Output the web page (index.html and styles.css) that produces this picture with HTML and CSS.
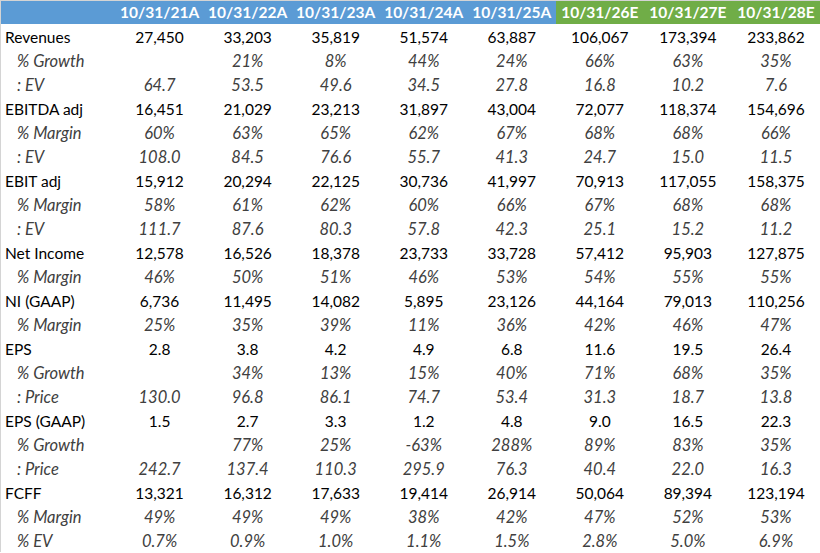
FILE: index.html
```html
<!DOCTYPE html>
<html>
<head>
<meta charset="utf-8">
<link rel="stylesheet" href="styles.css">
</head>
<body>
<table class="fin">
  <colgroup>
    <col class="c-label">
    <col class="c-num"><col class="c-num"><col class="c-num"><col class="c-num">
    <col class="c-num"><col class="c-num"><col class="c-num"><col class="c-num">
  </colgroup>
  <thead>
    <tr>
      <th class="hd-a"></th>
      <th class="hd-a">10/31/21A</th>
      <th class="hd-a">10/31/22A</th>
      <th class="hd-a">10/31/23A</th>
      <th class="hd-a">10/31/24A</th>
      <th class="hd-a">10/31/25A</th>
      <th class="hd-e">10/31/26E</th>
      <th class="hd-e">10/31/27E</th>
      <th class="hd-e">10/31/28E</th>
    </tr>
  </thead>
  <tbody>
    <tr class="main"><td>Revenues</td><td>27,450</td><td>33,203</td><td>35,819</td><td>51,574</td><td>63,887</td><td>106,067</td><td>173,394</td><td>233,862</td></tr>
    <tr class="sub"><td>% Growth</td><td></td><td>21%</td><td>8%</td><td>44%</td><td>24%</td><td>66%</td><td>63%</td><td>35%</td></tr>
    <tr class="sub"><td>: EV</td><td>64.7</td><td>53.5</td><td>49.6</td><td>34.5</td><td>27.8</td><td>16.8</td><td>10.2</td><td>7.6</td></tr>
    <tr class="main"><td>EBITDA adj</td><td>16,451</td><td>21,029</td><td>23,213</td><td>31,897</td><td>43,004</td><td>72,077</td><td>118,374</td><td>154,696</td></tr>
    <tr class="sub"><td>% Margin</td><td>60%</td><td>63%</td><td>65%</td><td>62%</td><td>67%</td><td>68%</td><td>68%</td><td>66%</td></tr>
    <tr class="sub"><td>: EV</td><td>108.0</td><td>84.5</td><td>76.6</td><td>55.7</td><td>41.3</td><td>24.7</td><td>15.0</td><td>11.5</td></tr>
    <tr class="main"><td>EBIT adj</td><td>15,912</td><td>20,294</td><td>22,125</td><td>30,736</td><td>41,997</td><td>70,913</td><td>117,055</td><td>158,375</td></tr>
    <tr class="sub"><td>% Margin</td><td>58%</td><td>61%</td><td>62%</td><td>60%</td><td>66%</td><td>67%</td><td>68%</td><td>68%</td></tr>
    <tr class="sub"><td>: EV</td><td>111.7</td><td>87.6</td><td>80.3</td><td>57.8</td><td>42.3</td><td>25.1</td><td>15.2</td><td>11.2</td></tr>
    <tr class="main"><td>Net Income</td><td>12,578</td><td>16,526</td><td>18,378</td><td>23,733</td><td>33,728</td><td>57,412</td><td>95,903</td><td>127,875</td></tr>
    <tr class="sub"><td>% Margin</td><td>46%</td><td>50%</td><td>51%</td><td>46%</td><td>53%</td><td>54%</td><td>55%</td><td>55%</td></tr>
    <tr class="main"><td>NI (GAAP)</td><td>6,736</td><td>11,495</td><td>14,082</td><td>5,895</td><td>23,126</td><td>44,164</td><td>79,013</td><td>110,256</td></tr>
    <tr class="sub"><td>% Margin</td><td>25%</td><td>35%</td><td>39%</td><td>11%</td><td>36%</td><td>42%</td><td>46%</td><td>47%</td></tr>
    <tr class="main"><td>EPS</td><td>2.8</td><td>3.8</td><td>4.2</td><td>4.9</td><td>6.8</td><td>11.6</td><td>19.5</td><td>26.4</td></tr>
    <tr class="sub"><td>% Growth</td><td></td><td>34%</td><td>13%</td><td>15%</td><td>40%</td><td>71%</td><td>68%</td><td>35%</td></tr>
    <tr class="sub"><td>: Price</td><td>130.0</td><td>96.8</td><td>86.1</td><td>74.7</td><td>53.4</td><td>31.3</td><td>18.7</td><td>13.8</td></tr>
    <tr class="main"><td>EPS (GAAP)</td><td>1.5</td><td>2.7</td><td>3.3</td><td>1.2</td><td>4.8</td><td>9.0</td><td>16.5</td><td>22.3</td></tr>
    <tr class="sub"><td>% Growth</td><td></td><td>77%</td><td>25%</td><td>-63%</td><td>288%</td><td>89%</td><td>83%</td><td>35%</td></tr>
    <tr class="sub"><td>: Price</td><td>242.7</td><td>137.4</td><td>110.3</td><td>295.9</td><td>76.3</td><td>40.4</td><td>22.0</td><td>16.3</td></tr>
    <tr class="main"><td>FCFF</td><td>13,321</td><td>16,312</td><td>17,633</td><td>19,414</td><td>26,914</td><td>50,064</td><td>89,394</td><td>123,194</td></tr>
    <tr class="sub"><td>% Margin</td><td>49%</td><td>49%</td><td>49%</td><td>38%</td><td>42%</td><td>47%</td><td>52%</td><td>53%</td></tr>
    <tr class="sub"><td>% EV</td><td>0.7%</td><td>0.9%</td><td>1.0%</td><td>1.1%</td><td>1.5%</td><td>2.8%</td><td>5.0%</td><td>6.9%</td></tr>
  </tbody>
</table>
</body>
</html>
```

FILE: styles.css
```css
html, body {
  margin: 0;
  padding: 0;
  background: #ffffff;
}

.fin {
  border-collapse: collapse;
  table-layout: fixed;
  width: 820px;
  font-family: Lato, "Liberation Sans", sans-serif;
  font-size: 15.5px;
  color: #000000;
  border-top: 1px solid #d4d4d4;
  border-left: 1px solid #d4d4d4;
}

.c-label { width: 115px; }
.c-num { width: 88px; }

.fin th,
.fin td {
  padding: 0;
  white-space: nowrap;
  overflow: hidden;
}

.fin th {
  height: 23px;
  line-height: 23px;
  color: #ffffff;
  font-weight: 700;
  text-align: center;
  vertical-align: middle;
}

.hd-a { background: #5b9bd5; }
.hd-e { background: #70ad47; }

.fin td {
  height: 24px;
  line-height: 20px;
  padding-top: 3px;
  box-sizing: border-box;
  text-align: center;
  vertical-align: top;
}

.fin td:first-child {
  text-align: left;
  padding-left: 4px;
}

.sub td {
  font-style: italic;
  font-size: 16.5px;
  color: #404040;
}

.sub td:first-child {
  padding-left: 16px;
}
```
